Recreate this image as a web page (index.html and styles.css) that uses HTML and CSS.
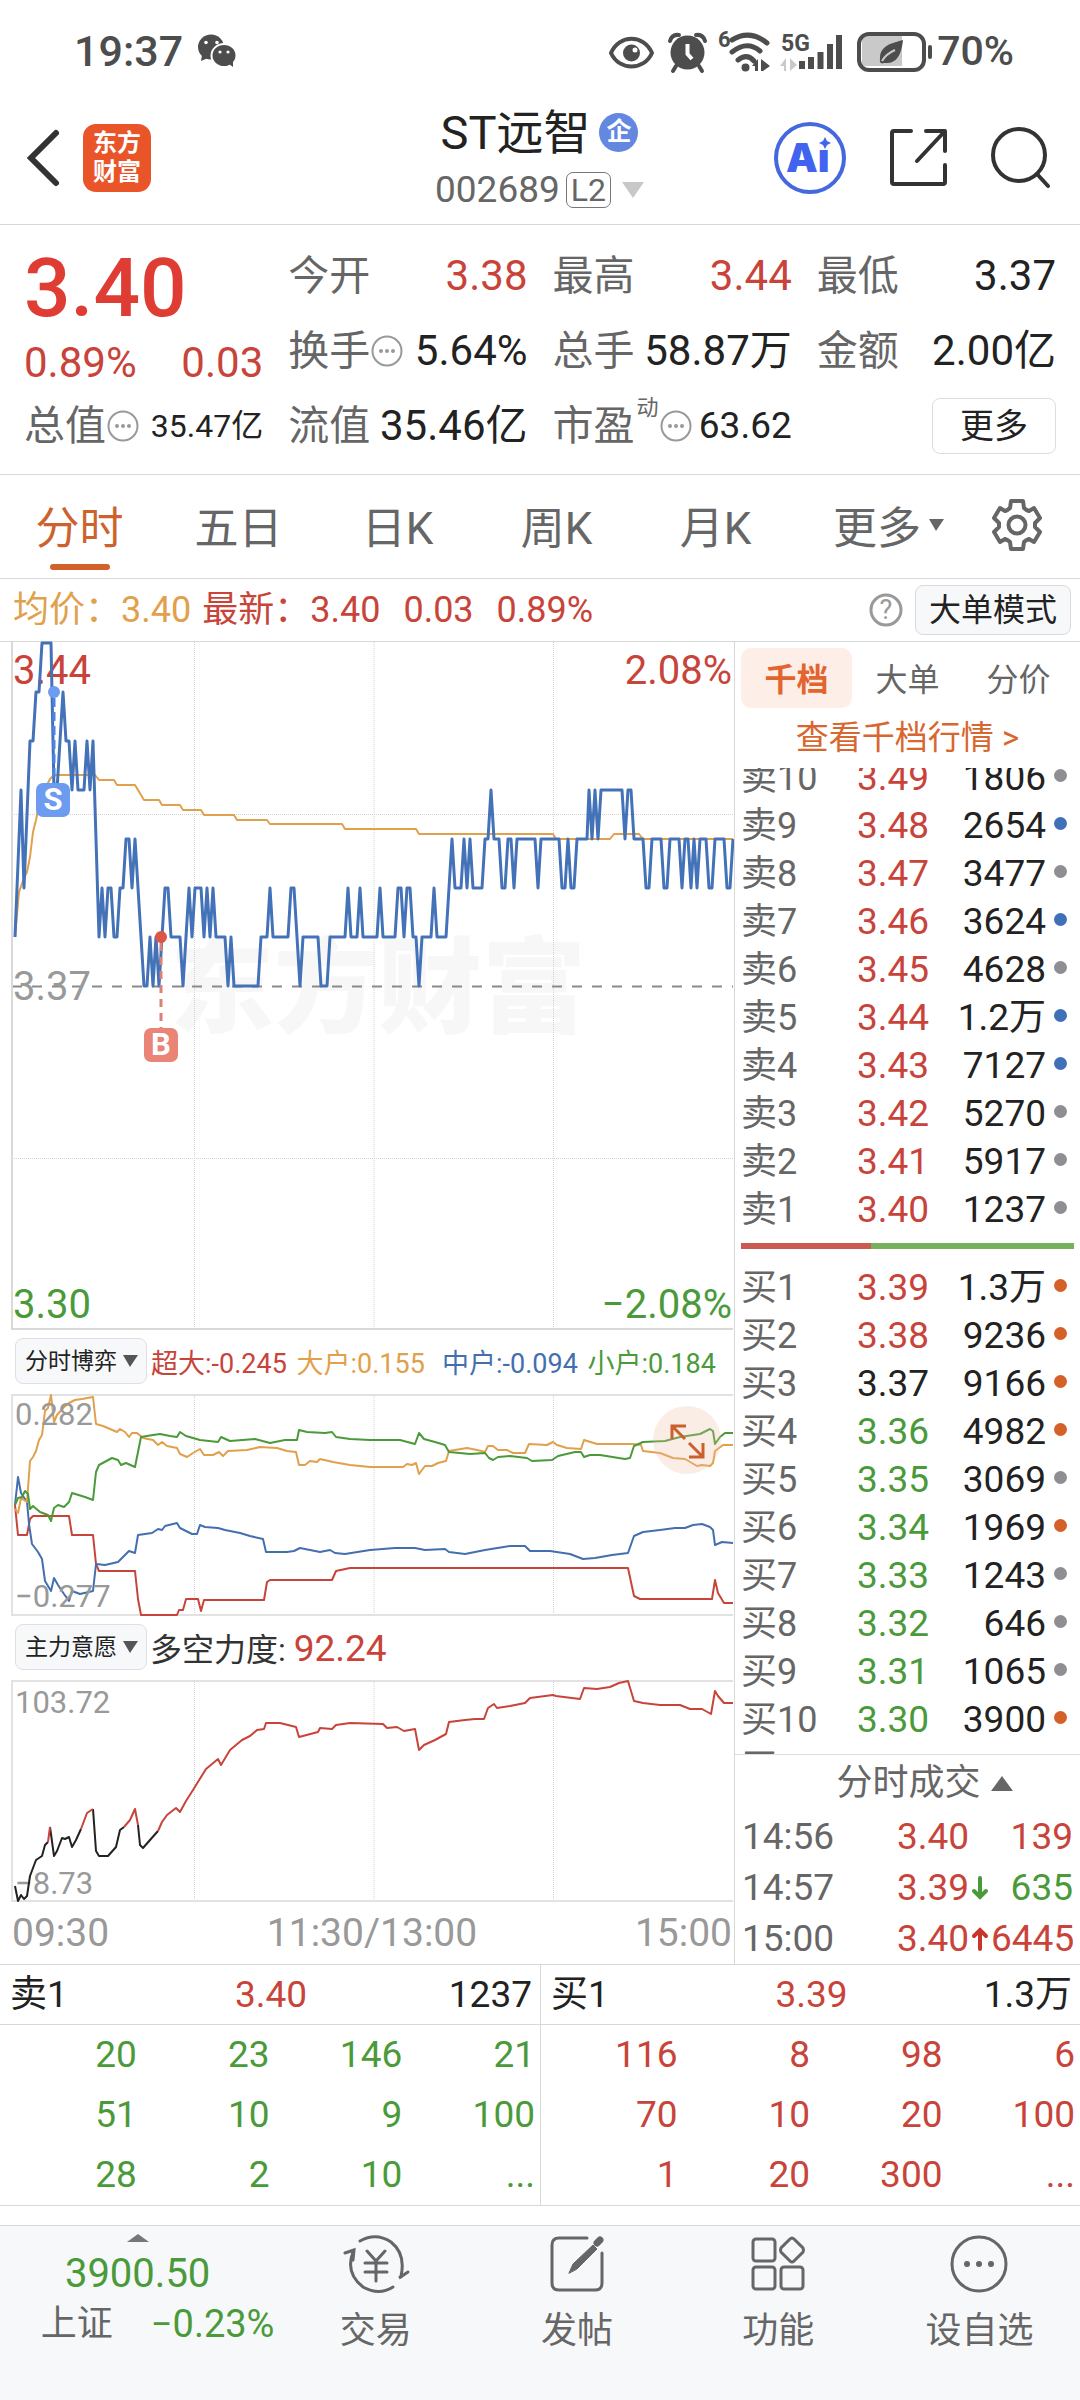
FILE: index.html
```html
<!DOCTYPE html>
<html lang="zh-CN">
<head>
<meta charset="utf-8">
<meta name="viewport" content="width=device-width, initial-scale=1">
<title>ST远智 002689</title>
<link rel="stylesheet" href="styles.css">
</head>
<body>
<div class="status">
  <span class="status-time">19:37</span>
  <svg class="wechat" width="38" height="34" viewBox="0 0 38 34"><ellipse cx="13" cy="13" rx="13" ry="12.500"/><path d="M4 21 3 27 10 24z"/><ellipse class="cut" cx="26" cy="21.500" rx="12.500" ry="11.500"/><path d="M31 30 35 33 35 27z"/><circle class="eye" cx="8" cy="8.500" r="1.800"/><circle class="eye" cx="19" cy="8.500" r="1.800"/><circle class="eye" cx="22" cy="18" r="1.600"/><circle class="eye" cx="30" cy="18" r="1.600"/></svg>
  <svg class="status-icons" width="326" height="44" viewBox="610 29 326 44">
    <path class="ln" d="M612 53C620 34 645 34 653 53C645 71 620 71 612 53Z"/><circle cx="632.500" cy="53" r="8.500"/><circle class="wh" cx="636" cy="50" r="2.500"/>
    <circle cx="688.500" cy="52.500" r="17"/><path class="ln3" d="M671 41Q673 34 680 35M706 41Q704 34 697 35M677 66 674 71M700 66 703 71"/><path class="lnw" d="M688.500 44V54L693 59"/>
    <path class="ln5" d="M733 40Q751 29 768 43M733 52Q748 40 761 51M739 60Q748 53 755 61"/><circle cx="746.500" cy="67.500" r="4"/><path d="M753 66 759 59V71H756V66zM762 59V71H764L771 66Z"/>
    <text x="719" y="47" class="s6">6</text><text x="782" y="51" class="s5">5G</text>
    <path class="pale" d="M781 66 787 58V71H785V66zM791 58V71L798 65z"/>
    <path class="bars" d="M803 61V69M812 57V69M821.500 52V69M831 44V69M840 35V69"/>
    <path class="pale" d="M863 36Q863 35 866 35H903V66H866Q863 66 863 65Z"/>
    <rect class="batt" x="860" y="34" width="65" height="36" rx="10"/><rect x="929" y="45" width="4" height="14" rx="2"/>
    <path d="M904 40C902 58 896 64 885 63Q880 65 881 58C881 45 894 43 904 40Z"/><path class="leaf" d="M883 61Q887 54 896 50"/>
  </svg>
  <span class="status-pct">70%</span>
</div>

<header class="head">
  <div class="head-left">
    <button class="plain" aria-label="返回"><svg width="32" height="56" viewBox="0 0 32 56"><path class="back" d="M28 3 3 28 28 53"/></svg></button>
    <a class="logo" href="#home">东方<br>财富</a>
  </div>
  <div class="title">
    <h1>ST远智<span class="qi">企</span></h1>
    <button class="code">002689<span class="l2">L2</span><svg width="22" height="16" viewBox="0 0 22 16"><path fill="#c8c8c8" d="M0 0H22L11 16z"/></svg></button>
  </div>
  <div class="head-right">
    <button class="plain" aria-label="Ai 助手"><svg width="74" height="74" viewBox="0 0 74 74"><circle cx="37" cy="37" r="34" fill="#fff" stroke="#4468de" stroke-width="4"/><text x="13" y="51" class="ai">Ai</text><circle cx="53" cy="22" r="7" fill="#fff"/><path fill="#4163ee" d="M52 16 54 20 58 22 54 24 52 28 50 24 46 22 50 20z"/></svg></button>
    <button class="plain" aria-label="分享"><svg width="60" height="60" viewBox="0 0 60 60"><path class="hi" d="M22 3H5Q3 3 3 5V54Q3 56 5 56H54Q56 56 56 54V37M37 3H56V23M56 3 28 33"/></svg></button>
    <button class="plain" aria-label="搜索"><svg width="60" height="62" viewBox="0 0 60 62"><ellipse class="hi" cx="28" cy="28" rx="26" ry="26"/><path class="hi" d="M46 47 57 59"/></svg></button>
  </div>
</header>

<section class="quote">
  <div class="q-main">
    <div class="price">3.40</div>
    <div class="chg"><span>0.89%</span><span>0.03</span></div>
    <div class="cell"><span class="k">总值</span><svg class="dots" viewBox="0 0 32 32"><circle cx="16" cy="16" r="14.500"/><path d="M10 16h0M16 16h0M22 16h0"/></svg><b class="sm">35.47亿</b></div>
  </div>
  <div class="q-col">
    <div class="cell"><span class="k">今开</span><b class="up">3.38</b></div>
    <div class="cell"><span class="k">换手</span><svg class="dots" viewBox="0 0 32 32"><circle cx="16" cy="16" r="14.500"/><path d="M10 16h0M16 16h0M22 16h0"/></svg><b>5.64%</b></div>
    <div class="cell"><span class="k">流值</span><b>35.46亿</b></div>
  </div>
  <div class="q-col">
    <div class="cell"><span class="k">最高</span><b class="up">3.44</b></div>
    <div class="cell"><span class="k">总手</span><b>58.87万</b></div>
    <div class="cell"><span class="k">市盈</span><span class="sup">动</span><svg class="dots" viewBox="0 0 32 32"><circle cx="16" cy="16" r="14.500"/><path d="M10 16h0M16 16h0M22 16h0"/></svg><b class="md">63.62</b></div>
  </div>
  <div class="q-col">
    <div class="cell"><span class="k">最低</span><b>3.37</b></div>
    <div class="cell"><span class="k">金额</span><b>2.00亿</b></div>
    <div class="cell end"><button class="more">更多</button></div>
  </div>
</section>

<nav class="tabs">
  <button class="on">分时</button><button>五日</button><button>日K</button><button>周K</button><button>月K</button>
  <button>更多<svg width="16" height="12" viewBox="0 0 16 12"><path fill="#666" d="M0 0H15L7 12z"/></svg></button>
  <button aria-label="设置"><svg width="52" height="54" viewBox="0 0 52 54"><path class="gear" d="M20 3H32L33 10Q35 12 38 13L43 10 49 20 44 25V29L49 34 43 44 38 41Q35 42 33 44L32 51H20L19 44Q17 42 14 41L9 44 3 34 8 29V25L3 20 9 10 14 13Q17 12 19 10Z"/><circle class="gear" cx="26" cy="27" r="8.500"/></svg></button>
</nav>

<section class="info">
  <span class="avg">均价：3.40</span>
  <span class="up">最新：3.40</span><span class="up gap">0.03</span><span class="up gap">0.89%</span>
  <button class="plain help" aria-label="说明"><svg width="34" height="34" viewBox="0 0 34 34"><circle cx="17" cy="17" r="15" fill="none" stroke="#999" stroke-width="3"/><text x="17" y="26" text-anchor="middle" class="qm">?</text></svg></button>
  <button class="mode">大单模式</button>
</section>

<main class="board">
  <section class="charts">
    <svg class="chart" viewBox="0 0 734 688" role="img" aria-label="分时走势">
      <text x="170" y="383" class="wm">东方财富</text>
      <path class="grid" d="M12 172.500H733M12 516.500H733M194.500 0V688M374 0V688M553.500 0V688"/>
      <path class="base" d="M12 344.500H733"/>
      <path class="frame" d="M12 0V687H733"/>
      <text x="13" y="42" class="t40 fr">3.44</text><text x="732" y="42" class="t40 fr" text-anchor="end">2.08%</text>
      <text x="13" y="358" class="t40 fn">3.37</text>
      <text x="13" y="676" class="t40 fg">3.30</text><text x="732" y="676" class="t40 fg" text-anchor="end">−2.08%</text>
      <polyline class="ly" points="15,295 19,250 24,236 27,230 30,215 33,190 36,178 39,163 46,145 50,137 54,133 95,133 99,138 114,138 117,143 135,143 144,158 159,158 162,163 180,163 183,168 201,168 204,173 234,173 237,178 267,178 270,182 342,182 345,187 416,187 419,192 553,192 556,197 610,197 614,192 639,192 643,197 733,197"/>
      <polyline class="price-line" points="15,295 21,148 24,246 30,99 33,99 36,50 39,50 42,1 51,1 54,148 57,148 63,50 66,99 69,99 72,148 75,99 78,148 84,148 87,99 90,148 93,99 99,295 102,246 105,295 108,246 111,246 114,295 117,295 120,246 123,246 126,197 129,197 132,246 135,197 138,246 144,344 147,344 150,295 153,344 156,295 159,344 162,295 165,246 168,246 171,295 180,295 183,344 189,246 192,295 195,246 201,246 204,295 207,246 210,295 213,246 216,295 225,295 228,344 231,295 234,344 258,344 261,295 267,295 270,246 273,295 288,295 291,246 294,246 300,344 303,295 318,295 321,344 327,344 330,295 345,295 348,246 351,295 357,295 360,246 363,295 377,295 380,246 383,295 395,295 398,246 401,246 404,295 407,246 410,246 413,295 416,295 419,344 422,295 431,295 434,246 437,295 446,295 452,197 455,246 461,246 464,197 467,246 470,197 473,246 482,246 485,197 488,197 491,148 494,197 499,197 502,246 505,246 508,197 511,197 514,246 517,197 535,197 538,246 541,197 559,197 562,246 565,246 568,197 571,246 574,246 577,197 587,197 589,148 592,197 595,148 598,197 601,148 622,148 625,197 628,148 631,148 634,197 643,197 646,246 649,246 652,197 661,197 664,246 667,246 670,197 679,197 682,246 685,197 688,197 691,246 694,197 697,246 700,197 706,197 709,246 712,246 715,197 724,197 727,246 730,246 733,197"/>
      <circle cx="54" cy="50" r="6" fill="#6c9bf0"/><path d="M54 56V141" stroke="#4c84e6" stroke-width="3" stroke-dasharray="9 5"/>
      <rect x="36" y="141" width="34" height="34" rx="7" fill="#6c9bf0"/><text x="53" y="168" class="mk" text-anchor="middle">S</text>
      <circle cx="161" cy="295" r="6" fill="#dc5548"/><path d="M161 301V386" stroke="#d98175" stroke-width="3" stroke-dasharray="8 6"/>
      <rect x="144" y="386" width="34" height="34" rx="7" fill="#e98476"/><text x="161" y="413" class="mk" text-anchor="middle">B</text>
    </svg>

    <div class="ind">
      <label class="pick"><select aria-label="指标一"><option>分时博弈</option></select><svg width="16" height="14" viewBox="0 0 16 14"><path fill="#555" d="M0 1H15L7 13z"/></svg></label>
      <div class="flows"><span class="up">超大:-0.245</span><span class="avg">大户:0.155</span><span class="mid">中户:-0.094</span><span class="down">小户:0.184</span></div>
    </div>

    <div class="chart-box">
      <svg class="chart" viewBox="0 0 734 222" role="img" aria-label="分时博弈图">
        <path class="grid" d="M194.500 0V222M374 0V222M553.500 0V222"/>
        <path class="frame thin" d="M733 1H12V221H733"/>
        <polyline class="l2r" points="15,111 18,141 27,141 30,125 33,122 69,122 72,141 93,141 96,170 99,177 135,177 138,205 141,221 177,221 179,216 183,216 186,205 198,205 201,217 204,206 264,206 267,188 270,186 332,186 336,177 350,174 628,174 631,188 634,202 640,205 712,205 715,186 718,199 724,209 733,209"/>
        <polyline class="l2b" points="15,111 18,83 21,99 27,108 29,130 32,150 38,158 42,165 45,187 51,197 54,184 58,191 64,200 69,207 72,197 80,200 93,197 96,170 105,171 118,168 129,157 135,159 138,141 152,139 158,135 162,136 165,132 177,129 180,134 192,140 197,140 200,131 205,133 218,134 225,136 240,139 250,142 263,145 266,158 287,158 294,157 300,154 310,156 320,158 330,156 335,159 345,160 370,156 395,154 415,154 425,156 445,155 449,158 465,160 485,156 510,152 525,152 530,157 550,157 570,160 583,165 595,164 612,161 628,159 634,142 643,138 660,136 675,134 685,134 693,131 702,130 710,133 713,136 715,151 722,148 733,149"/>
        <polyline class="l2y" points="15,115 18,119 21,104 27,108 30,67 33,63 36,57 39,46 42,41 45,17 48,14 51,1 54,28 57,21 63,14 69,9 75,6 82,5 93,3 96,30 103,32 110,35 117,38 120,35 125,38 129,43 132,39 137,39 143,44 153,46 158,51 162,48 167,52 177,54 180,60 187,63 193,59 200,55 204,61 213,61 219,58 223,62 228,57 247,56 260,53 277,54 287,57 296,58 299,71 305,71 310,67 317,68 320,65 333,68 350,71 370,73 403,73 407,70 412,71 416,69 419,80 425,72 432,72 438,69 446,67 449,57 467,54 477,56 485,58 488,52 493,52 498,56 507,56 513,59 525,59 529,50 547,51 553,48 557,51 567,54 581,55 584,46 597,50 633,50 641,51 643,57 660,59 673,64 685,65 697,72 702,71 710,72 713,69 715,57 723,51 733,51"/>
        <polyline class="l2g" points="15,111 18,104 22,103 25,97 28,100 30,115 33,112 40,118 48,121 51,127 54,114 58,111 64,113 69,108 72,99 85,103 93,106 96,78 99,71 112,64 118,66 121,71 126,69 135,73 141,43 153,41 160,40 170,42 177,43 180,38 183,40 186,42 200,46 218,48 221,43 230,47 255,45 270,49 285,46 297,46 299,36 307,38 325,39 332,38 336,43 350,45 370,46 390,46 400,46 415,50 419,39 424,45 435,48 445,51 449,58 470,60 485,59 489,64 493,66 498,63 510,62 527,64 532,67 552,66 558,62 575,58 581,58 584,63 590,61 600,61 625,65 630,64 634,52 643,48 665,47 680,43 700,40 710,35 713,37 715,50 720,43 725,39 733,39"/>
        <text x="15" y="31" class="t31">0.282</text><text x="15" y="213" class="t31">−0.277</text>
      </svg>
      <button class="expand" aria-label="展开"><svg width="68" height="68" viewBox="0 0 68 68"><path d="M19 33V20H33M20 21 32 33M36 37 49 50M50 37V51H36"/></svg></button>
    </div>

    <div class="ind">
      <label class="pick"><select aria-label="指标二"><option>主力意愿</option></select><svg width="16" height="14" viewBox="0 0 16 14"><path fill="#555" d="M0 1H15L7 13z"/></svg></label>
      <div class="force">多空力度: <span class="up">92.24</span></div>
    </div>

    <svg class="chart" viewBox="0 0 734 222" role="img" aria-label="主力意愿图">
      <path class="grid" d="M194.500 0V222M374 0V222M553.500 0V222"/>
      <path class="frame thin" d="M733 1H12V221H733"/>
      <text x="15" y="33" class="t31">103.72</text><text x="15" y="214" class="t31">−8.73</text>
      <path class="l3k" d="M15 206 18 221 21 215 24 219 27 216 30 196 36 180 42 176 45 165 48 162M50 147 54 176 57 171 62 158 65 159 69 157 72 167 76 160 81 149M93 129 96 171 99 176 108 176 116 167 120 150 124 147M138 145 140 165 143 168 150 160 158 151"/>
      <path class="l3r" d="M48 162 50 147M81 149 87 133 93 129M124 147 130 140 135 129 138 145M158 151 162 142 167 135 176 128 180 132 186 121 193 110 206 89 218 79 221 85 230 70 242 60 250 56 257 50 264 49 266 43 280 43 296 47 299 57 318 52 320 48 332 49 336 45 350 43 383 44 387 48 397 47 404 51 415 49 419 70 424 65 435 60 446 54 449 42 465 40 475 39 484 39 488 28 494 24 497 28 510 26 525 23 530 18 553 15 556 16 580 19 584 8 597 9 610 7 619 3 628 1 631 11 634 21 643 23 660 25 680 25 690 29 702 29 711 34 715 11 718 16 724 23 733 23"/>
    </svg>
    <div class="times"><span>09:30</span><span>11:30/13:00</span><span>15:00</span></div>
  </section>

  <aside class="side">
    <div class="side-tabs"><button class="on">千档</button><button>大单</button><button>分价</button></div>
    <a class="deep" href="#depth">查看千档行情 &gt;</a>
    <div class="book">
      <table class="levels lv-first">
        <tr><th>卖10</th><td class="up">3.49</td><td>1806</td><td><i></i></td></tr>
        <tr><th>卖9</th><td class="up">3.48</td><td>2654</td><td><i class="b"></i></td></tr>
        <tr><th>卖8</th><td class="up">3.47</td><td>3477</td><td><i></i></td></tr>
        <tr><th>卖7</th><td class="up">3.46</td><td>3624</td><td><i class="b"></i></td></tr>
        <tr><th>卖6</th><td class="up">3.45</td><td>4628</td><td><i></i></td></tr>
        <tr><th>卖5</th><td class="up">3.44</td><td>1.2万</td><td><i class="b"></i></td></tr>
        <tr><th>卖4</th><td class="up">3.43</td><td>7127</td><td><i class="b"></i></td></tr>
        <tr><th>卖3</th><td class="up">3.42</td><td>5270</td><td><i></i></td></tr>
        <tr><th>卖2</th><td class="up">3.41</td><td>5917</td><td><i></i></td></tr>
        <tr><th>卖1</th><td class="up">3.40</td><td>1237</td><td><i></i></td></tr>
      </table>
      <div class="ratio"><div class="ratio-sell" style="width:39%"></div></div>
      <table class="levels">
        <tr><th>买1</th><td class="up">3.39</td><td>1.3万</td><td><i class="o"></i></td></tr>
        <tr><th>买2</th><td class="up">3.38</td><td>9236</td><td><i class="o"></i></td></tr>
        <tr><th>买3</th><td>3.37</td><td>9166</td><td><i class="o"></i></td></tr>
        <tr><th>买4</th><td class="down">3.36</td><td>4982</td><td><i class="o"></i></td></tr>
        <tr><th>买5</th><td class="down">3.35</td><td>3069</td><td><i></i></td></tr>
        <tr><th>买6</th><td class="down">3.34</td><td>1969</td><td><i class="o"></i></td></tr>
        <tr><th>买7</th><td class="down">3.33</td><td>1243</td><td><i></i></td></tr>
        <tr><th>买8</th><td class="down">3.32</td><td>646</td><td><i></i></td></tr>
        <tr><th>买9</th><td class="down">3.31</td><td>1065</td><td><i></i></td></tr>
        <tr><th>买10</th><td class="down">3.30</td><td>3900</td><td><i class="o"></i></td></tr>
        <tr><th>买11</th><td class="down">3.29</td><td>97</td><td><i></i></td></tr>
      </table>
    </div>
    <div class="trades">
      <button class="trades-title">分时成交<svg width="22" height="15" viewBox="0 0 22 15"><path fill="#666" d="M0 15H22L11 0z"/></svg></button>
      <table>
        <tr><th>14:56</th><td class="up">3.40</td><td></td><td class="up">139</td></tr>
        <tr><th>14:57</th><td class="up">3.39</td><td><svg width="18" height="24" viewBox="0 0 18 24"><path stroke="#4a9a3a" d="M9 2V21M3 15 9 21 15 15"/></svg></td><td class="down">635</td></tr>
        <tr><th>15:00</th><td class="up">3.40</td><td><svg width="18" height="24" viewBox="0 0 18 24"><path stroke="#c8352b" d="M9 22V3M3 9 9 3 15 9"/></svg></td><td class="up">6445</td></tr>
      </table>
    </div>
  </aside>
</main>

<section class="queues">
  <div class="queue">
    <div class="q-head"><span>卖1</span><span class="up">3.40</span><span>1237</span></div>
    <table class="down"><tr><td>20</td><td>23</td><td>146</td><td>21</td></tr><tr><td>51</td><td>10</td><td>9</td><td>100</td></tr><tr><td>28</td><td>2</td><td>10</td><td>...</td></tr></table>
  </div>
  <div class="queue">
    <div class="q-head"><span>买1</span><span class="up">3.39</span><span>1.3万</span></div>
    <table class="up"><tr><td>116</td><td>8</td><td>98</td><td>6</td></tr><tr><td>70</td><td>10</td><td>20</td><td>100</td></tr><tr><td>1</td><td>20</td><td>300</td><td>...</td></tr></table>
  </div>
</section>

<nav class="bottom">
  <a class="index" href="#index"><svg width="22" height="8" viewBox="0 0 22 8"><path fill="#777" d="M0 8H22L11 0z"/></svg><span class="pt down">3900.50</span><span class="ix">上证<span class="down">−0.23%</span></span></a>
  <a href="#trade"><svg width="66" height="60" viewBox="0 0 66 60"><path d="M17 7Q33-2 48 8Q63 20 58 42M58 43 56 44 65 38M50 53Q36 62 20 53Q2 39 10 18M2 19 11 16 10 26M24 17 33 27 42 17M22 29H44M22 38H44M33 27V47"/></svg>交易</a>
  <a href="#post"><svg width="56" height="58" viewBox="0 0 56 58"><path d="M38 3H10Q3 3 3 10V48Q3 55 10 55H46Q53 55 53 48V18"/><path d="M48 8 51 5" stroke-width="7"/><path d="M20 38 24 29 44 10 48 14 28 34z" fill="#666" stroke-width="1"/></svg>发帖</a>
  <a href="#tools"><svg width="56" height="58" viewBox="0 0 56 58"><rect x="3" y="4" width="22" height="22" rx="3"/><rect x="3" y="32" width="22" height="22" rx="3"/><rect x="31" y="32" width="22" height="22" rx="3"/><path d="M40 4Q42 2 44 4L53 13Q54 15 53 17L44 26Q42 28 40 26L31 17Q30 15 31 13Z"/></svg>功能</a>
  <a href="#watch"><svg width="60" height="60" viewBox="0 0 60 60"><circle cx="30" cy="30" r="27"/><path class="pt3" d="M18 30h0M30 30h0M42 30h0"/></svg>设自选</a>
</nav>
</body>
</html>
```
FILE: styles.css
```css
* { box-sizing: border-box; }
body { margin: 0; background: #fff; color: #222; font-family: Roboto, "Noto Sans CJK SC", sans-serif; }
button, select { margin: 0; padding: 0; border: 0; background: none; color: inherit; font: inherit; }
a { color: inherit; text-decoration: none; }
svg { display: block; flex: none; overflow: visible; }
table { border-collapse: collapse; table-layout: fixed; width: 100%; }
th, td { padding: 0; font-weight: 400; text-align: left; }
.up { color: #c8443a; }
.down { color: #4a9a3a; }
.avg { color: #e0a04c; }
.mid { color: #446fae; }
.plain { display: block; }

.status { display: flex; align-items: center; height: 92px; padding: 10px 66px 0 74px; color: #4d4d4d; font-size: 43px; font-weight: 500; }
.wechat { margin-left: 15px; fill: #4d4d4d; }
.wechat .cut { stroke: #fff; stroke-width: 2; }
.wechat .eye { fill: #fff; }
.status-icons { margin-left: auto; fill: #4d4d4d; }
.status-icons path.ln, .status-icons .ln3, .status-icons .ln5, .status-icons .bars, .batt { fill: none; stroke: #4d4d4d; stroke-width: 4; stroke-linecap: round; }
.status-icons path.ln5 { stroke-width: 5; }
.status-icons path.bars { stroke-width: 6; stroke-linecap: butt; }
.status-icons .lnw { fill: none; stroke: #fff; stroke-width: 4; }
.status-icons .wh { fill: #fff; }
.status-icons .pale { fill: #c9c9c9; }
.status-icons .leaf { fill: none; stroke: #c9c9c9; stroke-width: 2; }
.s6 { font-size: 22px; font-weight: 700; }
.s5 { font-size: 23px; font-weight: 700; }
.status-pct { font-size: 41px; margin-left: 2px; }

.head { display: grid; grid-template-columns: 1fr auto 1fr; align-items: center; height: 133px; padding: 0 29px 0 28px; border-bottom: 1px solid #d8d8d8; }
.head-left { display: flex; align-items: center; gap: 23px; }
.back { fill: none; stroke: #333; stroke-width: 6; stroke-linecap: round; }
.logo { width: 68px; height: 68px; padding: 5px 0; border-radius: 13px; background: #ea5429; color: #fff; font-size: 24px; font-weight: 700; line-height: 29px; text-align: center; }
.title { text-align: center; }
.title h1 { display: flex; align-items: center; justify-content: center; margin: 0; font-size: 47px; font-weight: 400; line-height: 60px; }
.qi { width: 39px; height: 39px; margin-left: 9px; border-radius: 50%; background: #6488e0; color: #fff; font-size: 25px; font-weight: 700; line-height: 38px; text-align: center; }
.code { display: flex; align-items: center; height: 48px; margin-top: 3px; color: #666; font-size: 37px; }
.l2 { margin: 0 11px 0 6px; padding: 0 4px; border: 1px solid #777; border-radius: 7px; font-size: 32px; line-height: 34px; }
.head-right { display: flex; align-items: center; justify-content: flex-end; gap: 42px; }
.ai { fill: #4163ee; font-family: Inter, Roboto, sans-serif; font-size: 40px; font-weight: 900; }
.hi { fill: none; stroke: #333; stroke-width: 4; stroke-linecap: round; stroke-linejoin: round; }

.quote { display: grid; grid-template-columns: repeat(4, 1fr); gap: 25px; padding: 13px 24px 11px; border-bottom: 1px solid #d8d8d8; font-size: 42px; }
.price { height: 100px; color: #df3c33; font-size: 82px; font-weight: 500; line-height: 100px; }
.chg { display: flex; justify-content: space-between; height: 50px; color: #c8443a; line-height: 50px; }
.cell { display: flex; align-items: center; height: 75px; line-height: 60px; white-space: nowrap; }
.cell b { margin-left: auto; font-weight: 400; }
.cell .k { color: #666; font-size: 41px; }
.cell .sm { font-size: 32px; }
.cell .md { font-size: 37px; }
.cell .sup { align-self: flex-start; margin: 8px 0 0 2px; color: #666; font-size: 22px; line-height: 24px; }
.end { justify-content: flex-end; }
.dots { width: 32px; height: 32px; margin-left: 1px; fill: none; stroke: #999; stroke-width: 2; }
.dots path { stroke-width: 4; stroke-linecap: round; }
.more { width: 124px; height: 56px; border: 1px solid #ddd; border-radius: 8px; font-size: 34px; line-height: 50px; }

.tabs { display: grid; grid-template-columns: repeat(5, 159fr) 188fr 67fr; height: 104px; padding-right: 30px; border-bottom: 1px solid #d8d8d8; color: #666; font-size: 44px; }
.tabs button { position: relative; display: flex; align-items: center; justify-content: center; gap: 8px; padding-bottom: 4px; white-space: nowrap; }
.tabs .on { color: #cc632f; }
.tabs .on::after { content: ""; position: absolute; bottom: 8px; left: 50%; width: 60px; height: 6px; margin-left: -30px; border-radius: 3px; background: #d4602a; }
.gear { fill: none; stroke: #666; stroke-width: 4; stroke-linejoin: round; }

.info { display: flex; align-items: center; height: 63px; padding: 0 9px 0 13px; border-bottom: 1px solid #d8d8d8; font-size: 36px; line-height: 48px; white-space: nowrap; }
.info .up { margin-left: 11px; }
.info .gap { margin-left: 23px; }
.help { margin-left: auto; }
.qm { fill: #999; font-size: 27px; }
.mode { margin-left: 12px; width: 156px; height: 50px; border: 1px solid #d8dade; border-radius: 8px; background: #f7f8fa; font-size: 32px; line-height: 44px; }

.board { display: grid; grid-template-columns: 734fr 346fr; border-bottom: 1px solid #d8d8d8; }
.charts { min-width: 0; }
.chart { width: 100%; height: auto; }
.chart polyline, .l3k, .l3r { fill: none; stroke-width: 2; stroke-linejoin: round; }
.chart .price-line { stroke: #4472b8; stroke-width: 3; }
.ly, .l2y { stroke: #e0a04c; }
.l2g { stroke: #4a9a3a; }
.l2b { stroke: #446fae; }
.l2r, .l3r { stroke: #c8443a; }
.l3k { stroke: #222; }
.grid { fill: none; stroke: #d2d2d2; stroke-width: 1; stroke-dasharray: 1 1; }
.base { stroke: #8a8a8a; stroke-width: 2; stroke-dasharray: 10 10; }
.frame { fill: none; stroke: #d9d9d9; stroke-width: 2; }
.thin { stroke: #e2e2e2; }
.wm { fill: #f7f7f7; font-size: 104px; font-weight: 900; }
.t40 { font-size: 40px; }
.t31 { font-size: 31px; fill: #999; }
.fr { fill: #c8443a; }
.fn { fill: #999; }
.fg { fill: #4a9a3a; }
.mk { fill: #fff; font-size: 31px; font-weight: 700; }
.ind { display: flex; align-items: center; height: 64px; padding: 0 0 2px 15px; white-space: nowrap; }
.pick { position: relative; display: block; width: 132px; flex: none; }
.pick select { display: block; width: 132px; height: 46px; padding-left: 9px; border: 1px solid #dddfe4; border-radius: 8px; background: #f7f8fa; appearance: none; font-size: 23px; }
.pick svg { position: absolute; right: 8px; top: 16px; pointer-events: none; }
.flows { display: grid; grid-template-columns: repeat(4, 1fr); flex: 1; padding: 0 1px 0 4px; font-size: 27px; }
.force { padding-left: 3px; color: #333; font-size: 32px; }
.force .up { font-size: 37px; }
.chart-box { position: relative; }
.expand { position: absolute; top: 12px; right: 13px; width: 68px; height: 68px; border-radius: 50%; background: rgba(236, 190, 165, 0.28); }
.expand path { fill: none; stroke: #cb602c; stroke-width: 3; }
.times { display: flex; justify-content: space-between; height: 62px; padding: 0 2px 0 12px; color: #999; font-size: 39px; line-height: 62px; }

.side { display: flex; flex-direction: column; padding-top: 6px; border-left: 1px solid #d8d8d8; }
.side-tabs { display: grid; grid-template-columns: repeat(3, 1fr); height: 60px; padding: 0 6px; color: #666; font-size: 32px; }
.side-tabs button { padding-bottom: 2px; }
.side-tabs .on { border-radius: 10px; background: #fdeee7; color: #e2652f; font-weight: 700; }
.deep { color: #d8672f; font-size: 33px; line-height: 60px; text-align: center; }
.book { height: 986px; overflow: hidden; }
.levels { font-size: 37px; }
.lv-first { margin-top: -14px; }
.levels tr { height: 48px; line-height: 48px; }
.levels th { width: 122px; padding-left: 6px; color: #666; font-size: 36px; }
.levels td:nth-child(2) { width: 90px; }
.levels td:nth-child(3) { text-align: right; white-space: nowrap; }
.levels td:nth-child(4) { width: 34px; padding: 0 0 5px 8px; }
.levels i { display: block; width: 13px; height: 13px; border-radius: 50%; background: #8e8e93; }
.levels i.b { background: #4070b8; }
.levels i.o { background: #d4602a; }
.ratio { height: 6px; margin: 9px 6px 15px; background: #76b25c; }
.ratio-sell { height: 6px; background: #cc5a52; }
.trades { border-top: 1px solid #dedede; }
.trades-title { display: flex; align-items: center; justify-content: center; gap: 10px; width: 100%; height: 56px; padding-left: 34px; color: #666; font-size: 36px; line-height: 56px; }
.trades table { font-size: 37px; }
.trades tr { height: 51px; line-height: 51px; }
.trades th { width: 162px; padding-left: 7px; color: #666; }
.trades td:nth-child(2) { width: 74px; }
.trades td:nth-child(3) { width: 20px; }
.trades td:nth-child(4) { padding-right: 7px; text-align: right; }
.trades td path { fill: none; stroke-width: 4; stroke-linecap: round; }

.queues { display: grid; grid-template-columns: 1fr 1fr; margin-bottom: 19px; border-bottom: 1px solid #d8d8d8; font-size: 37px; }
.queue + .queue { border-left: 1px solid #d8d8d8; }
.q-head { display: grid; grid-template-columns: 1fr auto 1fr; height: 60px; padding: 0 8px 0 10px; border-bottom: 1px solid #d8d8d8; line-height: 60px; }
.q-head span:last-child { text-align: right; }
.queue table { width: calc(100% - 9px); margin-left: 4px; }
.queue tr { height: 60px; line-height: 60px; }
.queue td { text-align: right; }

.bottom { display: grid; grid-template-columns: 275fr repeat(4, 201fr); height: 176px; border-top: 1px solid #d8d8d8; background: #f7f8fa; color: #666; font-size: 36px; }
.bottom a { display: flex; flex-direction: column; align-items: center; gap: 12px; padding-top: 8px; line-height: 50px; white-space: nowrap; }
.bottom a > svg { height: 60px; fill: none; stroke: #666; stroke-width: 3; stroke-linecap: round; }
.bottom .pt3 { stroke-width: 6; }
.bottom .index { gap: 0; line-height: 50px; }
.bottom .index > svg { height: 8px; margin-bottom: 7px; stroke: none; }
.pt { font-size: 40px; }
.ix { display: flex; gap: 38px; padding-left: 40px; }
.ix .down { font-size: 38px; }
```
